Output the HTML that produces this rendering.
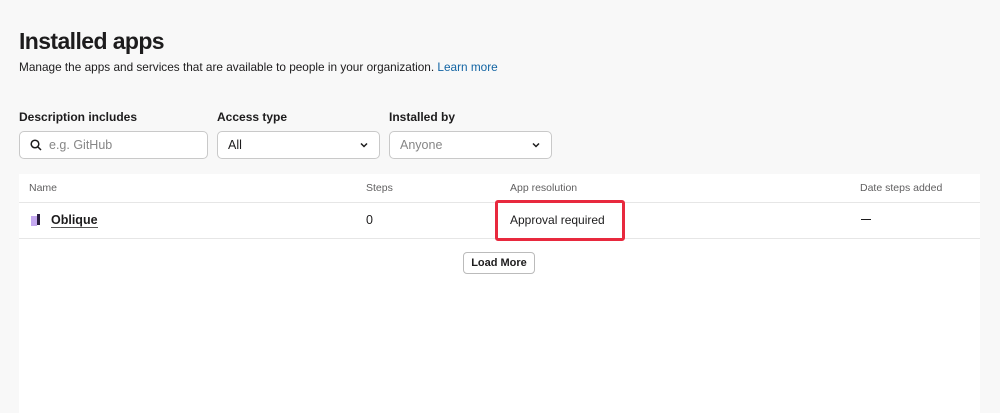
<!DOCTYPE html>
<html><head><style>
body{margin:0;width:1000px;height:413px;background:#f8f8f8;font-family:"Liberation Sans",sans-serif;color:#1d1c1d;position:relative;overflow:hidden}
.a{position:absolute}
h1{margin:0;font-size:23px;font-weight:bold;position:absolute;left:19px;top:28px;letter-spacing:-0.6px}
.lbl{font-size:12px;font-weight:bold;top:110px}
.box{top:131px;height:28px;border:1px solid #c9c9c9;border-radius:5px;background:#fff;box-sizing:border-box;font-size:12.5px;line-height:26px}
.chev{position:absolute;right:10px;top:8px}
.th{font-size:10.5px;color:#616061;top:182px}
</style></head><body>
<h1>Installed apps</h1>
<div class="a" style="left:19px;top:60px;font-size:11.8px">Manage the apps and services that are available to people in your organization. <span style="color:#1264a3">Learn more</span></div>
<div class="a lbl" style="left:19px">Description includes</div>
<div class="a lbl" style="left:217px">Access type</div>
<div class="a lbl" style="left:389px">Installed by</div>
<div class="a box" style="left:19px;width:189px;padding-left:29px;color:#868686">
<svg class="a" style="left:10px;top:7px" width="12" height="12" viewBox="0 0 12 12"><circle cx="5" cy="5" r="3.8" fill="none" stroke="#1d1c1d" stroke-width="1.5"/><path d="M8 8L11 11" stroke="#1d1c1d" stroke-width="1.5"/></svg>e.g. GitHub</div>
<div class="a box" style="left:217px;width:163px;padding-left:10px">All<svg class="chev" width="10" height="10" viewBox="0 0 10 10"><path d="M2 3.5L5 6.5L8 3.5" fill="none" stroke="#1d1c1d" stroke-width="1.5"/></svg></div>
<div class="a box" style="left:389px;width:163px;padding-left:10px;color:#868686">Anyone<svg class="chev" width="10" height="10" viewBox="0 0 10 10"><path d="M2 3.5L5 6.5L8 3.5" fill="none" stroke="#1d1c1d" stroke-width="1.5"/></svg></div>
<div class="a" style="left:19px;top:174px;width:961px;height:239px;background:#fff"></div>
<div class="a" style="left:19px;top:202px;width:961px;height:1px;background:#e6e6e6"></div>
<div class="a" style="left:19px;top:238px;width:961px;height:1px;background:#e6e6e6"></div>
<div class="a th" style="left:29px">Name</div>
<div class="a th" style="left:366px">Steps</div>
<div class="a th" style="left:510px">App resolution</div>
<div class="a th" style="left:860px">Date steps added</div>
<svg class="a" style="left:30px;top:213px" width="12" height="14" viewBox="0 0 12 14"><rect x="1" y="3" width="6" height="10" fill="#c4a8f0"/><rect x="7" y="1" width="3" height="11" fill="#2a1e40"/></svg>
<div class="a" style="left:51px;top:213px;font-size:12.5px;font-weight:bold;border-bottom:1px solid #555;line-height:14px">Oblique</div>
<div class="a" style="left:366px;top:213px;font-size:12.5px">0</div>
<div class="a" style="left:495px;top:200px;width:130px;height:41px;border:3px solid #e8293e;border-radius:3px;box-sizing:border-box"></div>
<div class="a" style="left:510px;top:213px;font-size:12px">Approval required</div>
<div class="a" style="left:861px;top:219px;width:10px;height:1px;background:#1d1c1d"></div>
<div class="a" style="left:463px;top:252px;width:72px;height:22px;border:1px solid #bbb;border-radius:4px;box-sizing:border-box;font-size:11px;font-weight:bold;text-align:center;line-height:20px;background:#fff">Load More</div>
</body></html>
